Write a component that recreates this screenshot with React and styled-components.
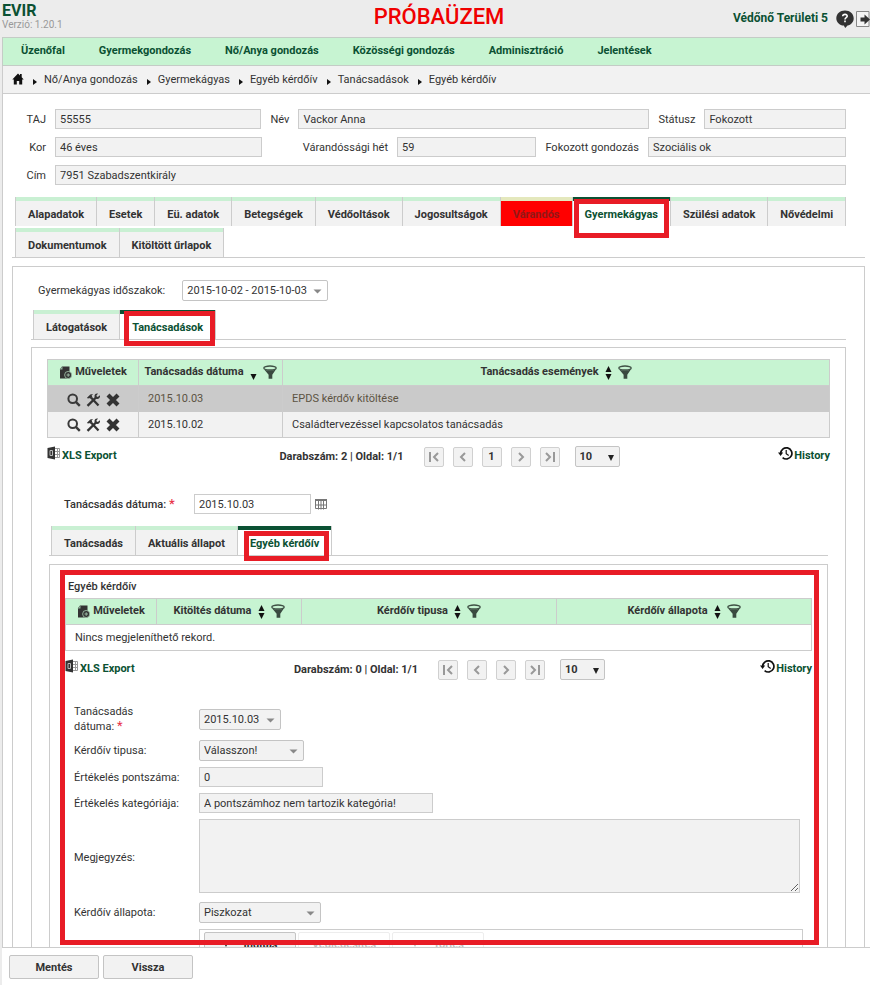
import React from "react";
import styled, { createGlobalStyle, css } from "styled-components";

const menuItems = [
  "Üzenőfal",
  "Gyermekgondozás",
  "Nő/Anya gondozás",
  "Közösségi gondozás",
  "Adminisztráció",
  "Jelentések",
];

const breadcrumb = [
  "Nő/Anya gondozás",
  "Gyermekágyas",
  "Egyéb kérdőív",
  "Tanácsadások",
  "Egyéb kérdőív",
];

const patientTabs = [
  { name: "Alapadatok" },
  { name: "Esetek" },
  { name: "Eü. adatok" },
  { name: "Betegségek" },
  { name: "Védőoltások" },
  { name: "Jogosultságok" },
  { name: "Várandós", alert: true },
  { name: "Gyermekágyas", active: true },
  { name: "Szülési adatok" },
  { name: "Nővédelmi" },
  { name: "Dokumentumok" },
  { name: "Kitöltött űrlapok" },
];

const periodTabs = [
  { name: "Látogatások" },
  { name: "Tanácsadások", active: true },
];

const adviceTabs = [
  { name: "Tanácsadás" },
  { name: "Aktuális állapot" },
  { name: "Egyéb kérdőív", active: true },
];

const adviceRows = [
  { date: "2015.10.03", event: "EPDS kérdőv kitöltése", selected: true },
  { date: "2015.10.02", event: "Családtervezéssel kapcsolatos tanácsadás" },
];

const GlobalStyle = createGlobalStyle`
  *, *::before, *::after {
    box-sizing: border-box;
  }
  body {
    margin: 0;
    background: #ececec;
    color: #333;
    font: 11px/15px Roboto, sans-serif;
  }
  button, input, select, textarea {
    font: inherit;
    color: inherit;
  }
  a {
    color: inherit;
    text-decoration: none;
  }
`;

const Page = styled.div`
  display: flex;
  flex-direction: column;
  height: 100vh;
  padding-left: 2px;
  overflow: hidden;
`;

const Header = styled.header`
  display: grid;
  grid-template-columns: 1fr auto 1fr;
  height: 37px;
  flex: none;
`;

const Logo = styled.div`
  color: #0b5133;
  font-size: 16px;
  font-weight: 700;
  line-height: 16px;
  padding-top: 3px;
`;

const Version = styled.div`
  color: #999;
  font-size: 10px;
  font-weight: 400;
  line-height: 11px;
`;

const Warning = styled.h1`
  margin: 0;
  padding-left: 6px;
  color: #f00000;
  font-size: 22px;
  font-weight: 500;
  line-height: 33px;
`;

const User = styled.div`
  display: flex;
  justify-content: flex-end;
  align-items: center;
  color: #0b5133;
  font-size: 12px;
  font-weight: 700;
  margin-right: -3px;
  white-space: nowrap;
`;

const IconButton = styled.button`
  display: inline-flex;
  flex: none;
  padding: 0;
  border: 0;
  background: none;
  color: #333;
`;

const UserButtons = styled.span`
  display: flex;
  gap: 2px;
  margin-left: 8px;
`;

const Menu = styled.nav`
  display: flex;
  flex: none;
  height: 29px;
  padding-left: 1px;
  background: #c7f4d2;
  border: 1px solid #c4ccc6;
  border-right: 0;
  color: #0b5133;
  font-weight: 700;

  a {
    padding: 5px 17px;
  }
`;

const Breadcrumb = styled.nav`
  display: flex;
  align-items: center;
  flex: none;
  height: 28px;
  padding-left: 9px;
  background: #f2f2f2;
  border: solid #ccc;
  border-width: 0 0 1px 1px;
`;

const Arrow = styled.svg`
  flex: none;
  margin: 5px 7px 0 9px;
`;

const Main = styled.main`
  flex: 1;
  min-height: 0;
  overflow: hidden;
  background: #fff;
  border-left: 1px solid #ccc;
`;

const PatientForm = styled.form`
  display: grid;
  gap: 8px;
  padding: 15px 24px 0 0;
`;

const PatientRow = styled.div`
  display: grid;
  grid-template-columns: ${(props) => props.$columns};
  gap: 9px;
  align-items: center;

  label {
    text-align: right;
    white-space: nowrap;
  }
`;

const Input = styled.input`
  width: ${(props) => props.$width || "100%"};
  min-width: 0;
  height: 20px;
  padding: 0 4px;
  border: 1px solid #ccc;
  background: ${(props) => (props.$white ? "#fff" : "#f2f2f2")};
`;

const TabArea = styled.div`
  margin: 12px 5px 0 9px;
`;

const TabBar = styled.div`
  display: flex;
  flex-wrap: wrap;
  row-gap: 2px;
  padding-left: ${(props) => props.$indent || "2px"};
  border-bottom: 1px solid #ccc;
`;

const TabButton = styled.button`
  position: relative;
  height: 29px;
  padding: 6px 12px 0;
  border: solid #ccc;
  border-width: 0 0 0 1px;
  background: linear-gradient(#c9f0d3 4px, #f2f2f2 4px);
  box-shadow: 1px 0 0 #ccc;
  font-weight: 700;
  white-space: nowrap;

  ${(props) =>
    props.$alert &&
    css`
      background: linear-gradient(#e4e8bd 4px, #f00 4px);
      color: #931717;
    `}

  ${(props) =>
    props.$active &&
    css`
      background: linear-gradient(#0b5133 4px, #fff 4px);
      color: #0b5133;
      z-index: 1;

      &::after {
        content: "";
        position: absolute;
        inset: ${props.$frame};
        border: 5px solid #e81c26;
      }
    `}
`;

const OuterPanel = styled.section`
  margin: 8px 5px 0 9px;
  padding: 13px 18px 0;
  border: solid #ccc;
  border-width: 1px 1px 0;
`;

const PeriodRow = styled.div`
  display: flex;
  align-items: center;
  gap: 17px;
  padding-left: 7px;
  margin-bottom: 9px;
`;

const MiddlePanel = styled.section`
  margin-top: 7px;
  padding: 11px 15px 0;
  border: solid #ccc;
  border-width: 1px 1px 0;
`;

const InnerPanel = styled.section`
  position: relative;
  min-height: 420px;
  margin-top: 8px;
  padding: 14px 15px 0;
  border: solid #ccc;
  border-width: 1px 1px 0;
`;

const AdviceArea = styled.div`
  margin: 0 -13px 0 2px;
  padding-right: 15px;
`;

const Frame = styled.div`
  position: absolute;
  top: 5px;
  left: 10px;
  right: 8px;
  height: 375px;
  border: 5px solid #e81c26;
  pointer-events: none;
`;

const SelectBox = styled.span`
  position: relative;
  display: block;
  width: ${(props) => props.$width};

  select {
    appearance: none;
    display: block;
    width: 100%;
    height: 21px;
    padding: 0 4px;
    border: 1px solid #c4c4c4;
    border-radius: 2px;
    background: ${(props) => (props.$white ? "#fff" : "#f2f2f2")};
    font-weight: ${(props) => (props.$bold ? 700 : 400)};
  }

  svg {
    position: absolute;
    right: 6px;
    top: 9px;
    pointer-events: none;
  }
`;

const Table = styled.table`
  width: 100%;
  table-layout: fixed;
  border-collapse: collapse;
  border: 1px solid #ccc;

  th,
  td {
    height: 26px;
    padding: 0 9px;
    text-align: left;
    border-left: 1px solid #ccc;
  }
  th {
    padding: 0 4px;
    background: #c7f4d2;
    border-bottom: 1px solid #ccc;
    font-weight: 700;
    white-space: nowrap;
  }
`;

const Row = styled.tr`
  background: ${(props) => props.$background};
  color: ${(props) => (props.$faded ? "#5c5342" : "#333")};
`;

const HeadCell = styled.div`
  display: flex;
  align-items: center;
  justify-content: center;
  gap: ${(props) => props.$gap || "6px"};

  > span {
    padding-bottom: 2px;
  }
`;

const Actions = styled.div`
  display: flex;
  justify-content: center;
  gap: 5px;
  padding-top: 2px;
`;

const Pager = styled.div`
  display: grid;
  grid-template-columns: 1fr auto 1fr;
  margin-top: 8px;
  font-weight: 700;
`;

const PagerLink = styled.a`
  display: flex;
  justify-self: ${(props) => (props.$end ? "end" : "start")};
  gap: 1px;
  color: #0b5133;
  height: 20px;

  > span {
    padding-top: 2px;
  }
`;

const PagerMiddle = styled.div`
  display: flex;
  align-items: center;
  gap: 9px;
  padding-left: 22px;

  > span:first-child {
    margin-right: 11px;
  }
  > span:last-child {
    margin-left: 6px;
  }
`;

const PageButton = styled.button`
  display: flex;
  align-items: center;
  justify-content: center;
  width: 20px;
  height: 20px;
  padding: 0;
  border: 1px solid #d0d0d0;
  border-radius: 2px;
  background: #f2f2f2;
  font-weight: 700;
  color: ${(props) => (props.disabled ? "#999" : "#333")};
`;

const DateRow = styled.div`
  display: flex;
  align-items: center;
  padding-left: 17px;
  margin: 27px 0 12px;

  label {
    width: 130px;
    font-weight: 500;
  }
  button {
    margin-left: 4px;
  }
`;

const Required = styled.span`
  color: #e8344a;
  font-size: 13px;
  line-height: 10px;
`;

const PanelTitle = styled.h2`
  margin: 0 0 4px 3px;
  font-size: 11px;
  font-weight: 500;
  line-height: 15px;
`;

const SurveyForm = styled.form`
  display: grid;
  grid-template-columns: 111px 1fr;
  gap: 6px 14px;
  align-items: center;
  justify-items: start;
  padding: 24px 9px 0;
`;

const TextArea = styled.textarea`
  display: block;
  width: calc(100% - 3px);
  height: 74px;
  margin-bottom: 3px;
  border: 1px solid #ccc;
  background: #f2f2f2;
`;

const ButtonPanel = styled.div`
  grid-column: 2;
  display: flex;
  gap: 2px;
  width: 100%;
  padding: 2px 4px;
  border: 1px solid #ccc;
`;

const Button = styled.button`
  display: flex;
  align-items: center;
  justify-content: center;
  gap: 15px;
  width: ${(props) => props.$width || "90px"};
  height: 24px;
  padding: 0;
  border: 1px solid #c4c4c4;
  border-radius: 2px;
  background: #f2f2f2;
  font-weight: 700;

  &:disabled {
    opacity: 0.3;
    background: #fff;
  }
`;

const Footer = styled.footer`
  display: flex;
  flex: none;
  gap: 4px;
  height: 38px;
  padding: 7px;
  border-top: 1px solid #ccc;
  background: #fff;
`;

const Caret = () => (
  <svg width="9" height="5" viewBox="0 0 9 5">
    <path d="M0.5 0.5h8L4.5 4.5z" fill="#888" />
  </svg>
);

const SmallCaret = () => (
  <svg width="6" height="6" viewBox="0 0 6 6">
    <path d="M0 0h6L3 6z" fill="#222" />
  </svg>
);

const HomeIcon = () => (
  <svg width="12" height="14" viewBox="0 -2 12 14">
    <path
      d="M6 0.5L0.3 6.4h1.5v5h3V8h2.4v3.4h3v-5h1.5L9.7 4.2V1H8v1.6z"
      fill="#111"
    />
  </svg>
);

const HelpIcon = () => (
  <svg width="18" height="18" viewBox="0 0 18 18">
    <path
      d="M9 0.5c5 0 8.7 3.4 8.7 7.7 0 3.8-2.7 6.6-6.2 7.3L9.2 18l-1.4-2.4C3.5 15.2.3 12.2.3 8.2.3 3.9 4 .5 9 .5z"
      fill="#333"
    />
    <path
      d="M6.7 6.3c.2-2.7 4.7-2.5 4.5 0C11.1 7.7 9 7.6 9 9.4M9 10.5v1.7"
      fill="none"
      stroke="#fff"
      strokeWidth="1.6"
    />
  </svg>
);

const ExitIcon = () => (
  <svg width="17" height="18" viewBox="0 0 17 18">
    <path d="M13 1.5H0.5v15H13z" fill="#f4f4f4" stroke="#888" />
    <path d="M4.5 7.5h4v-3l5.5 5-5.5 5v-3h-4z" fill="#333" />
  </svg>
);

const NewIcon = () => (
  <svg width="13" height="13" viewBox="0 0 13 13">
    <path d="M3 0.5h7.5v12H1V3z" fill="#333" />
    <path d="M0.5 3.5l3-3v3z" fill="#8fb29a" />
    <circle cx="9.2" cy="9" r="3.6" fill="#333" stroke="#a9cbb2" strokeWidth="0.8" />
    <path d="M7.5 9H11M9.2 7.300v3.500" stroke="#9ab8a2" />
  </svg>
);

const SortIcon = ({ down }) => (
  <svg width="7" height="14" viewBox="0 0 7 14">
    {!down && <path d="M3.5 0L6.5 6h-6z" fill="#111" />}
    <path d="M0.5 8h6L3.5 14z" fill="#111" />
  </svg>
);

const FilterIcon = () => (
  <svg width="14" height="15" viewBox="0 0 14 15">
    <ellipse cx="7" cy="3" rx="6.2" ry="2" fill="none" stroke="#3f5145" strokeWidth="1.3" />
    <path d="M1 4.2c2.5 1.6 9.5 1.6 12 0L9.3 9.8v4H5.6v-4z" fill="#3a4a40" />
  </svg>
);

const SearchIcon = () => (
  <svg width="14" height="14" viewBox="0 0 14 14">
    <circle cx="5.7" cy="5.7" r="4.3" fill="none" stroke="#3a3a3a" strokeWidth="2" />
    <path d="M8.8 8.8l4 4" stroke="#3a3a3a" strokeWidth="2.4" />
  </svg>
);

const ToolsIcon = () => (
  <svg width="15" height="14" viewBox="0 0 15 14">
    <path d="M1.5 12.8L10 4.5" stroke="#333" strokeWidth="2.4" />
    <path
      d="M14 2.2l-2.3 1.9-1.5-1.2L12 .5C9.500 0 8 1.800 8.600 4l1.900 1.900c2 .5 4-1.300 3.500-3.700z"
      fill="#333"
    />
    <path d="M1 4.8L4.3 1.4 7 1 5.6 2.7l.7.9-2.2 2.2-1-1-1 1z" fill="#333" />
    <path d="M5 4.5l7.5 8" stroke="#333" strokeWidth="2.2" />
  </svg>
);

const DeleteIcon = () => (
  <svg width="14" height="14" viewBox="0 0 14 14">
    <path d="M2 2l10 10M12 2L2 12" stroke="#333" strokeWidth="4.2" />
  </svg>
);

const XlsIcon = () => (
  <svg width="14" height="14" viewBox="0 0 14 14">
    <path d="M8 2.5h4.5v9H8M8 5.5h4M8 8.5h4M10.5 2.5v9" fill="none" stroke="#999" />
    <path d="M0.5 2L8 0.5v13L0.5 12z" fill="#333" />
    <path d="M3 4.5h2.5v5H3z" fill="none" stroke="#bbb" />
  </svg>
);

const HistoryIcon = () => (
  <svg width="15" height="15" viewBox="0 0 15 15">
    <path d="M2.7 7.5A5.6 5.6 0 1 1 4.6 11.6" fill="none" stroke="#111" strokeWidth="1.7" />
    <path d="M0 6.5h5.2L2.6 10z" fill="#111" />
    <path d="M8.2 4v3.7l2.5 1.8" fill="none" stroke="#111" strokeWidth="1.2" />
  </svg>
);

const CalendarIcon = () => (
  <svg width="12" height="12" viewBox="0 0 12 12">
    <path d="M0 1h12v2H0z" fill="#777" />
    <path
      d="M0.5 1.5h11v9H0.5zM3.5 1.5v10M6 1.5v10M8.5 1.5v10M0.5 7h11"
      fill="none"
      stroke="#777"
    />
  </svg>
);

const pagerPaths = {
  "Első oldal": "M2 1v10M10 2L6 6l4 4",
  "Előző oldal": "M8 2L4 6l4 4",
  "Következő oldal": "M4 2l4 4-4 4",
  "Utolsó oldal": "M2 2l4 4-4 4M10 1v10",
};

const StepButton = ({ name }) => (
  <PageButton type="button" aria-label={name} disabled>
    <svg width="12" height="12" viewBox="0 0 12 12">
      <path d={pagerPaths[name]} fill="none" stroke="#999" strokeWidth="2" />
    </svg>
  </PageButton>
);

const Select = ({ id, label, value, width, white, bold }) => (
  <SelectBox $width={width} $white={white} $bold={bold}>
    <select id={id} aria-label={label} defaultValue={value}>
      <option>{value}</option>
    </select>
    {bold ? <SmallCaret /> : <Caret />}
  </SelectBox>
);

const Tabs = ({ tabs, indent, frame }) => (
  <TabBar $indent={indent}>
    {tabs.map((tab) => (
      <TabButton
        key={tab.name}
        type="button"
        $active={tab.active}
        $alert={tab.alert}
        $frame={frame}
      >
        {tab.name}
      </TabButton>
    ))}
  </TabBar>
);

const ColumnHead = ({ name, down }) => (
  <HeadCell>
    <span>{name}</span>
    <SortIcon down={down} />
    <FilterIcon />
  </HeadCell>
);

const OperationsHead = () => (
  <HeadCell $gap="3px">
    <NewIcon />
    <span>Műveletek</span>
  </HeadCell>
);

const Pagination = ({ count, page }) => (
  <Pager>
    <PagerLink href="#xls">
      <XlsIcon />
      <span>XLS Export</span>
    </PagerLink>
    <PagerMiddle>
      <span>Darabszám: {count} | Oldal: 1/1</span>
      <StepButton name="Első oldal" />
      <StepButton name="Előző oldal" />
      {page && <PageButton type="button">{page}</PageButton>}
      <StepButton name="Következő oldal" />
      <StepButton name="Utolsó oldal" />
      <Select label="Sorok száma" value="10" width="45px" bold />
    </PagerMiddle>
    <PagerLink href="#history" $end>
      <HistoryIcon />
      <span>History</span>
    </PagerLink>
  </Pager>
);

const PatientData = () => (
  <PatientForm>
    <PatientRow $columns="43px 207fr auto 352fr auto 142fr">
      <label htmlFor="taj">TAJ</label>
      <Input id="taj" defaultValue="55555" readOnly />
      <label htmlFor="nev">Név</label>
      <Input id="nev" defaultValue="Vackor Anna" readOnly />
      <label htmlFor="statusz">Státusz</label>
      <Input id="statusz" defaultValue="Fokozott" readOnly />
    </PatientRow>
    <PatientRow $columns="43px 207fr 117px 139fr 94px 198fr">
      <label htmlFor="kor">Kor</label>
      <Input id="kor" defaultValue="46 éves" readOnly />
      <label htmlFor="het">Várandóssági hét</label>
      <Input id="het" defaultValue="59" readOnly />
      <label htmlFor="fokozott">Fokozott gondozás</label>
      <Input id="fokozott" defaultValue="Szociális ok" readOnly />
    </PatientRow>
    <PatientRow $columns="43px 1fr">
      <label htmlFor="cim">Cím</label>
      <Input id="cim" defaultValue="7951 Szabadszentkirály" readOnly />
    </PatientRow>
  </PatientForm>
);

const AdviceTable = () => (
  <Table>
    <colgroup>
      <col width="91" />
      <col width="144" />
      <col />
    </colgroup>
    <thead>
      <tr>
        <th>
          <OperationsHead />
        </th>
        <th>
          <ColumnHead name="Tanácsadás dátuma" down />
        </th>
        <th>
          <ColumnHead name="Tanácsadás események" />
        </th>
      </tr>
    </thead>
    <tbody>
      {adviceRows.map((row) => (
        <Row
          key={row.date}
          $background={row.selected ? "#cacaca" : "#f2f2f2"}
          $faded={row.selected}
        >
          <td>
            <Actions>
              <IconButton type="button" aria-label="Megtekintés">
                <SearchIcon />
              </IconButton>
              <IconButton type="button" aria-label="Szerkesztés">
                <ToolsIcon />
              </IconButton>
              <IconButton type="button" aria-label="Törlés">
                <DeleteIcon />
              </IconButton>
            </Actions>
          </td>
          <td>{row.date}</td>
          <td>{row.event}</td>
        </Row>
      ))}
    </tbody>
  </Table>
);

const SurveyTable = () => (
  <Table>
    <colgroup>
      <col width="91" />
      <col width="145" />
      <col />
      <col />
    </colgroup>
    <thead>
      <tr>
        <th>
          <OperationsHead />
        </th>
        <th>
          <ColumnHead name="Kitöltés dátuma" />
        </th>
        <th>
          <ColumnHead name="Kérdőív tipusa" />
        </th>
        <th>
          <ColumnHead name="Kérdőív állapota" />
        </th>
      </tr>
    </thead>
    <tbody>
      <Row $background="#fff">
        <td colSpan={4}>Nincs megjeleníthető rekord.</td>
      </Row>
    </tbody>
  </Table>
);

const Survey = () => (
  <SurveyForm>
    <label htmlFor="kerdoivDatum">
      Tanácsadás
      <br />
      dátuma: <Required>*</Required>
    </label>
    <Select id="kerdoivDatum" value="2015.10.03" width="82px" />
    <label htmlFor="tipus">Kérdőív tipusa:</label>
    <Select id="tipus" value="Válasszon!" width="105px" />
    <label htmlFor="pont">Értékelés pontszáma:</label>
    <Input id="pont" $width="124px" defaultValue="0" readOnly />
    <label htmlFor="kategoria">Értékelés kategóriája:</label>
    <Input
      id="kategoria"
      $width="234px"
      defaultValue="A pontszámhoz nem tartozik kategória!"
      readOnly
    />
    <label htmlFor="megjegyzes">Megjegyzés:</label>
    <TextArea id="megjegyzes" />
    <label htmlFor="allapot">Kérdőív állapota:</label>
    <Select id="allapot" value="Piszkozat" width="122px" />
    <ButtonPanel>
      <Button type="button" $width="92px">
        <SmallCaret />
        Indítás
      </Button>
      <Button type="button" $width="92px" disabled>
        Véglegesítés
      </Button>
      <Button type="button" $width="92px" disabled>
        <SmallCaret />
        Törlés
      </Button>
    </ButtonPanel>
  </SurveyForm>
);

export default function App() {
  return (
    <Page>
      <GlobalStyle />
      <Header>
        <Logo>
          EVIR
          <Version>Verzió: 1.20.1</Version>
        </Logo>
        <Warning>PRÓBAÜZEM</Warning>
        <User>
          Védőnő Területi 5
          <UserButtons>
            <IconButton type="button" aria-label="Súgó">
              <HelpIcon />
            </IconButton>
            <IconButton type="button" aria-label="Kilépés">
              <ExitIcon />
            </IconButton>
          </UserButtons>
        </User>
      </Header>
      <Menu>
        {menuItems.map((item) => (
          <a key={item} href="#menu">
            {item}
          </a>
        ))}
      </Menu>
      <Breadcrumb>
        <a href="#home" aria-label="Kezdőlap">
          <HomeIcon />
        </a>
        {breadcrumb.map((item, index) => (
          <React.Fragment key={index}>
            <Arrow width="4" height="6" viewBox="0 0 4 6">
              <path d="M0 0L4 3 0 6z" fill="#111" />
            </Arrow>
            <a href="#crumb">{item}</a>
          </React.Fragment>
        ))}
      </Breadcrumb>
      <Main>
        <PatientData />
        <TabArea>
          <Tabs tabs={patientTabs} indent="3px" frame="2px 1px -12px 1px" />
        </TabArea>
        <OuterPanel>
          <PeriodRow>
            <label htmlFor="idoszak">Gyermekágyas időszakok:</label>
            <Select
              id="idoszak"
              value="2015-10-02 - 2015-10-03"
              width="146px"
              white
            />
          </PeriodRow>
          <Tabs tabs={periodTabs} frame="1px 0 -7px 4px" />
          <MiddlePanel>
            <AdviceTable />
            <Pagination count={2} page={1} />
            <DateRow>
              <label htmlFor="datum">
                Tanácsadás dátuma: <Required>*</Required>
              </label>
              <Input id="datum" $width="117px" $white defaultValue="2015.10.03" />
              <IconButton type="button" aria-label="Naptár">
                <CalendarIcon />
              </IconButton>
            </DateRow>
            <AdviceArea>
              <Tabs tabs={adviceTabs} frame="5px 2px -6px 6px" />
              <InnerPanel>
                <PanelTitle>Egyéb kérdőív</PanelTitle>
                <SurveyTable />
                <Pagination count={0} />
                <Survey />
                <Frame />
              </InnerPanel>
            </AdviceArea>
          </MiddlePanel>
        </OuterPanel>
      </Main>
      <Footer>
        <Button type="button">Mentés</Button>
        <Button type="button">Vissza</Button>
      </Footer>
    </Page>
  );
}
